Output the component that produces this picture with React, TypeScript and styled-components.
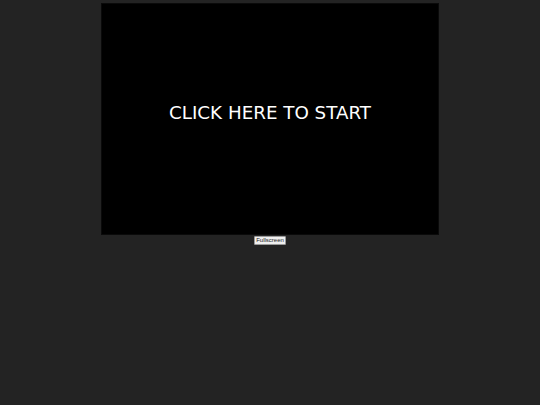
import React from "react";
import styled, { createGlobalStyle } from "styled-components";

const Global = createGlobalStyle`
  html, body {
    margin: 0;
    padding: 0;
    background: #232323;
  }
  body {
    font-family: "DejaVu Sans", Verdana, sans-serif;
  }
`;

const Page = styled.div`
  display: flex;
  flex-direction: column;
  align-items: center;
  padding-top: 3px;
  width: 540px;
  height: 405px;
  box-sizing: border-box;
`;

const Screen = styled.div`
  width: 338px;
  height: 232px;
  background: #000;
  box-sizing: border-box;
  border: 1px solid #0a0a0a;
  display: flex;
  justify-content: center;
  padding-top: 97px;
  cursor: pointer;
`;

const StartText = styled.div`
  color: #ffffff;
  font-family: "DejaVu Sans", Verdana, sans-serif;
  font-size: 18.3px;
  line-height: 24px;
  height: 24px;
`;

const FullscreenButton = styled.button`
  margin-top: 1px;
  width: 32px;
  height: 9px;
  padding: 0;
  border: 1px solid #9a9a9a;
  border-radius: 1px;
  background: #efefef;
  color: #222;
  font-family: "Liberation Sans", Arial, sans-serif;
  font-size: 6px;
  line-height: 7px;
  display: flex;
  align-items: center;
  justify-content: center;
`;

export default function App() {
  return (
    <>
      <Global />
      <Page>
        <Screen>
          <StartText>CLICK HERE TO START</StartText>
        </Screen>
        <FullscreenButton>Fullscreen</FullscreenButton>
      </Page>
    </>
  );
}
